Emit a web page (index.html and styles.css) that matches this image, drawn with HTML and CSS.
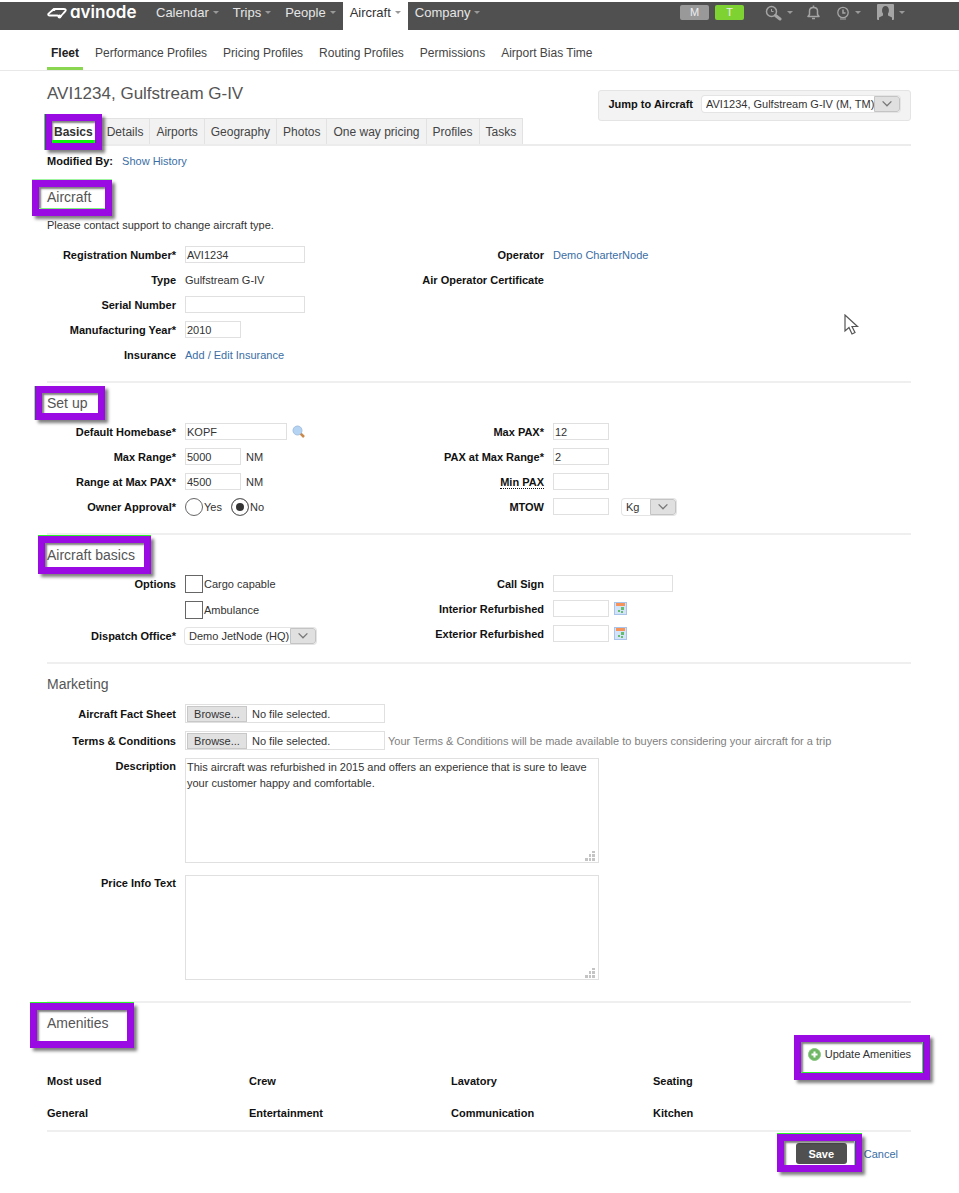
FILE: index.html
```html
<!DOCTYPE html>
<html lang="en">
<head>
    <meta charset="UTF-8">
    <meta name="viewport" content="width=device-width, initial-scale=1.0">
    <title>AVI1234, Gulfstream G-IV - Avinode</title>
    <link rel="stylesheet" href="styles.css">
</head>
<body>
    <header class="top-bar">
        <a class="logo" href="#">
            <svg width="20" height="14" viewBox="0 0 20 14" fill="none" stroke="#fff" stroke-width="1.800" stroke-linejoin="round" stroke-linecap="round">
                <path d="M10.500 9.500H2.500C0.800 9.500 0.800 8.200 2 7.300C4 5.500 5.500 3.500 8 3H17C19.500 3 19 4.500 18 5.500C16.500 7 15.500 8.500 14 10"/>
                <circle cx="12.500" cy="10.500" r="2" fill="#fff" stroke="none"/>
                <circle cx="7" cy="3.500" r="1.500" fill="#fff" stroke="none"/>
            </svg>
            <span>avinode</span>
        </a>
        <nav class="main-nav">
            <a href="#">Calendar<i class="caret"></i></a>
            <a href="#">Trips<i class="caret"></i></a>
            <a href="#">People<i class="caret"></i></a>
            <a href="#" class="active">Aircraft<i class="caret"></i></a>
            <a href="#">Company<i class="caret"></i></a>
        </nav>
        <div class="tools">
            <button class="badge" type="button">M</button>
            <button class="badge badge-green" type="button">T</button>
            <a class="tool tool-search" href="#" aria-label="Search">
                <svg width="17" height="16" viewBox="0 0 17 16" fill="none" stroke="#a5a5a5">
                    <circle cx="6.500" cy="6.500" r="5" stroke-width="1.500"/>
                    <path d="M6.500 4V6.500H8.500" stroke-width="1"/>
                    <path d="M10.500 10.500L15 14" stroke-width="3" stroke-linecap="round"/>
                </svg>
                <i class="caret"></i>
            </a>
            <a class="tool" href="#" aria-label="Notifications">
                <svg width="13" height="15" viewBox="0 0 13 15" fill="none" stroke="#a5a5a5" stroke-width="1.500">
                    <path d="M1 11.500H12L10.500 9.500V6C10.500 3.500 9 2.500 6.500 2.500S2.500 3.500 2.500 6V9.500Z" stroke-linejoin="round"/>
                    <path d="M6.500 0.500V2.500M5 13.500H8"/>
                </svg>
            </a>
            <a class="tool tool-clock" href="#" aria-label="Recent">
                <svg width="14" height="14" viewBox="0 0 14 14" fill="none" stroke="#a5a5a5">
                    <circle cx="7" cy="6.500" r="5.200" stroke-width="1.300"/>
                    <path d="M7 3.500V7H9.500" stroke-width="1.500"/>
                    <path d="M4 13H10" stroke-width="1"/>
                </svg>
                <i class="caret"></i>
            </a>
            <a class="tool tool-user" href="#" aria-label="Account">
                <svg width="17" height="16" viewBox="0 0 17 16">
                    <rect width="17" height="16" rx="1" fill="#a5a5a5"/>
                    <path d="M2 16V13.500L6 11.500V9.500C4.500 8 4.500 2 8.500 2S12.500 8 11 9.500V11.500L15 13.500V16Z" fill="#505050"/>
                </svg>
                <i class="caret"></i>
            </a>
        </div>
    </header>

    <nav class="sub-nav">
        <a href="#" class="active">Fleet</a>
        <a href="#">Performance Profiles</a>
        <a href="#">Pricing Profiles</a>
        <a href="#">Routing Profiles</a>
        <a href="#">Permissions</a>
        <a href="#">Airport Bias Time</a>
    </nav>

    <main class="page">
        <div class="page-head">
            <div>
                <h1>AVI1234, Gulfstream G-IV</h1>
                <nav class="tabs">
                    <a href="#" class="active">Basics<span class="mark mark-basics"></span></a>
                    <a href="#">Details</a>
                    <a href="#">Airports</a>
                    <a href="#">Geography</a>
                    <a href="#">Photos</a>
                    <a href="#">One way pricing</a>
                    <a href="#">Profiles</a>
                    <a href="#">Tasks</a>
                </nav>
            </div>
            <div class="jump">
                <label for="jump">Jump to Aircraft</label>
                <span class="select select-jump">
                    <select id="jump"><option>AVI1234, Gulfstream G-IV (M, TM)</option></select>
                    <svg viewBox="0 0 26 16"><path d="M8 5L13 10L18 5"/></svg>
                </span>
            </div>
        </div>

        <p class="modified"><b>Modified By:</b> <a href="#">Show History</a></p>

        <form>
            <section class="first">
                <h2>Aircraft<span class="mark mark-aircraft"></span></h2>
                <p class="note">Please contact support to change aircraft type.</p>
                <div class="columns">
                    <div class="rows">
                        <div class="row">
                            <label for="reg">Registration Number*</label>
                            <input class="medium" type="text" id="reg" value="AVI1234">
                        </div>
                        <div class="row">
                            <span class="label">Type</span>
                            <span>Gulfstream G-IV</span>
                        </div>
                        <div class="row">
                            <label for="serial">Serial Number</label>
                            <input class="medium" type="text" id="serial">
                        </div>
                        <div class="row">
                            <label for="year">Manufacturing Year*</label>
                            <input class="short" type="text" id="year" value="2010">
                        </div>
                        <div class="row">
                            <span class="label">Insurance</span>
                            <a href="#">Add / Edit Insurance</a>
                        </div>
                    </div>
                    <div class="rows">
                        <div class="row">
                            <span class="label">Operator</span>
                            <a href="#">Demo CharterNode</a>
                        </div>
                        <div class="row">
                            <span class="label">Air Operator Certificate</span>
                        </div>
                    </div>
                </div>
                <svg class="pointer" width="16" height="22" viewBox="0 0 16 22">
                    <path d="M1 1V17L5 13.500L8 20L11 18.500L8 12.500H13.500Z" fill="#fff" stroke="#555" stroke-width="1.200"/>
                </svg>
            </section>

            <section>
                <h2>Set up<span class="mark mark-setup"></span></h2>
                <div class="columns">
                    <div class="rows">
                        <div class="row">
                            <label for="homebase">Default Homebase*</label>
                            <input class="base" type="text" id="homebase" value="KOPF">
                            <button class="icon" type="button" aria-label="Find airport">
                                <svg width="13" height="13" viewBox="0 0 13 13">
                                    <path d="M8.500 8.500L12 12" stroke="#c98a4b" stroke-width="2.500"/>
                                    <circle cx="5.500" cy="5.500" r="4.500" fill="#b5d3f3" stroke="#a4bfe0"/>
                                </svg>
                            </button>
                        </div>
                        <div class="row">
                            <label for="max-range">Max Range*</label>
                            <input class="short" type="text" id="max-range" value="5000">
                            <span>NM</span>
                        </div>
                        <div class="row">
                            <label for="range-pax">Range at Max PAX*</label>
                            <input class="short" type="text" id="range-pax" value="4500">
                            <span>NM</span>
                        </div>
                        <div class="row">
                            <span class="label">Owner Approval*</span>
                            <label class="check"><input type="radio" name="approval">Yes</label>
                            <label class="check"><input type="radio" name="approval" checked>No</label>
                        </div>
                    </div>
                    <div class="rows">
                        <div class="row">
                            <label for="max-pax">Max PAX*</label>
                            <input class="short" type="text" id="max-pax" value="12">
                        </div>
                        <div class="row">
                            <label for="pax-range">PAX at Max Range*</label>
                            <input class="short" type="text" id="pax-range" value="2">
                        </div>
                        <div class="row">
                            <label for="min-pax"><span class="hint">Min PAX</span></label>
                            <input class="short" type="text" id="min-pax">
                        </div>
                        <div class="row">
                            <label for="mtow">MTOW</label>
                            <input class="short" type="text" id="mtow">
                            <span class="select select-unit">
                                <select aria-label="Weight unit"><option>Kg</option></select>
                                <svg viewBox="0 0 26 16"><path d="M8 5L13 10L18 5"/></svg>
                            </span>
                        </div>
                    </div>
                </div>
            </section>

            <section>
                <h2>Aircraft basics<span class="mark mark-options"></span></h2>
                <div class="columns">
                    <div class="rows">
                        <div class="row">
                            <span class="label">Options</span>
                            <label class="check"><input type="checkbox">Cargo capable</label>
                        </div>
                        <div class="row">
                            <span class="label"></span>
                            <label class="check"><input type="checkbox">Ambulance</label>
                        </div>
                        <div class="row">
                            <label for="office">Dispatch Office*</label>
                            <span class="select select-office">
                                <select id="office"><option>Demo JetNode (HQ)</option></select>
                                <svg viewBox="0 0 26 16"><path d="M8 5L13 10L18 5"/></svg>
                            </span>
                        </div>
                    </div>
                    <div class="rows">
                        <div class="row">
                            <label for="call-sign">Call Sign</label>
                            <input class="medium" type="text" id="call-sign">
                        </div>
                        <div class="row">
                            <label for="interior">Interior Refurbished</label>
                            <input class="short" type="text" id="interior">
                            <button class="icon" type="button" aria-label="Pick date">
                                <svg width="13" height="13" viewBox="0 0 13 13">
                                    <rect x="0.500" y="0.500" width="12" height="12" fill="#d3e4f8" stroke="#a9c4ea"/>
                                    <rect x="2" y="1" width="9" height="3" fill="#f5935a"/>
                                    <path d="M7 5H10V8H7ZM4 8H6V10H4ZM7 9H9V11H7Z" fill="#62bd6d"/>
                                </svg>
                            </button>
                        </div>
                        <div class="row">
                            <label for="exterior">Exterior Refurbished</label>
                            <input class="short" type="text" id="exterior">
                            <button class="icon" type="button" aria-label="Pick date">
                                <svg width="13" height="13" viewBox="0 0 13 13">
                                    <rect x="0.500" y="0.500" width="12" height="12" fill="#d3e4f8" stroke="#a9c4ea"/>
                                    <rect x="2" y="1" width="9" height="3" fill="#f5935a"/>
                                    <path d="M7 5H10V8H7ZM4 8H6V10H4ZM7 9H9V11H7Z" fill="#62bd6d"/>
                                </svg>
                            </button>
                        </div>
                    </div>
                </div>
            </section>

            <section>
                <h2>Marketing</h2>
                <div class="rows">
                    <div class="row">
                        <label for="fact-sheet">Aircraft Fact Sheet</label>
                        <span class="file">
                            <span class="browse">Browse...</span>
                            <span>No file selected.</span>
                            <input type="file" id="fact-sheet">
                        </span>
                    </div>
                    <div class="row">
                        <label for="terms">Terms &amp; Conditions</label>
                        <span class="file">
                            <span class="browse">Browse...</span>
                            <span>No file selected.</span>
                            <input type="file" id="terms">
                        </span>
                        <span class="help">Your Terms &amp; Conditions will be made available to buyers considering your aircraft for a trip</span>
                    </div>
                    <div class="row row-area">
                        <label for="description">Description</label>
                        <span class="area">
                            <textarea id="description">This aircraft was refurbished in 2015 and offers an experience that is sure to leave your customer happy and comfortable.</textarea>
                            <svg width="10" height="10" viewBox="0 0 10 10"><path d="M7 0h3v2h-3zM7 3h3v3h-3zM7 7h3v3h-3zM4 3h2v3h-2zM4 7h2v3h-2zM0 7h3v3h-3z"/></svg>
                        </span>
                    </div>
                    <div class="row row-area">
                        <label for="price-info">Price Info Text</label>
                        <span class="area">
                            <textarea id="price-info"></textarea>
                            <svg width="10" height="10" viewBox="0 0 10 10"><path d="M7 0h3v2h-3zM7 3h3v3h-3zM7 7h3v3h-3zM4 3h2v3h-2zM4 7h2v3h-2zM0 7h3v3h-3z"/></svg>
                        </span>
                    </div>
                </div>
            </section>

            <section class="amenities">
                <h2>Amenities<span class="mark mark-amenities"></span></h2>
                <div class="update">
                    <a href="#">
                        <svg width="13" height="13" viewBox="0 0 13 13">
                            <circle cx="6.500" cy="6.500" r="6" fill="#6fb765" stroke="#8cc583"/>
                            <path d="M6.500 3.500V9.500M3.500 6.500H9.500" stroke="#fff" stroke-width="2"/>
                        </svg>
                        Update Amenities
                        <span class="mark mark-update"></span>
                    </a>
                </div>
                <div class="amenity-list">
                    <b>Most used</b>
                    <b>Crew</b>
                    <b>Lavatory</b>
                    <b>Seating</b>
                    <b>General</b>
                    <b>Entertainment</b>
                    <b>Communication</b>
                    <b>Kitchen</b>
                </div>
            </section>

            <div class="actions">
                <span class="save-wrap">
                    <button class="save" type="submit">Save</button>
                    <span class="mark mark-save"></span>
                </span>
                <a href="#">Cancel</a>
            </div>
        </form>
    </main>
</body>
</html>
```

FILE: styles.css
```css
* {
    box-sizing: border-box;
}

body {
    margin: 0;
    padding-top: 2px;
    font-family: "Liberation Sans", Arial, sans-serif;
    font-size: 11px;
    line-height: 16px;
    color: #333;
    background-color: #fff;
}

a {
    color: #3a6ea5;
    text-decoration: none;
}

a:hover {
    text-decoration: underline;
}

h1, h2, p {
    margin: 0;
    font-weight: normal;
}

svg {
    display: block;
    flex: none;
}

b {
    color: #111;
}

input, select, textarea, button {
    font: inherit;
    color: inherit;
    margin: 0;
}

/* Top bar */
.top-bar {
    display: flex;
    height: 28px;
    padding: 0 54px 0 47px;
    background-color: #505050;
}

.logo {
    display: flex;
    gap: 3px;
    width: 102px;
    padding-top: 2px;
    font-family: Inter, "Open Sans", sans-serif;
    font-feature-settings: "cv11";
    font-size: 17px;
    font-weight: 600;
    color: #fff;
}

.logo svg {
    margin-top: 2px;
}

.main-nav {
    display: flex;
}

.main-nav a {
    display: flex;
    align-items: center;
    gap: 4px;
    padding: 0 7px 7px;
    font-size: 13px;
    color: #e6e6e6;
}

.main-nav .active {
    background-color: #fff;
    color: #333;
}

.caret {
    width: 5px;
    border: solid transparent;
    border-width: 3px 3px 0;
    border-top-color: #999;
}

.tools {
    display: flex;
    align-items: center;
    gap: 6px;
    margin-left: auto;
    padding-bottom: 7px;
}

.badge {
    width: 29px;
    height: 15px;
    padding: 0;
    border: 0;
    border-radius: 2px;
    background-color: #999;
    color: #eee;
    line-height: 15px;
}

.badge-green {
    background-color: #7ed333;
}

.tool {
    display: flex;
    align-items: center;
    gap: 5px;
}

.tool-search {
    margin: 0 8px 0 15px;
}

.tool-clock {
    margin: 0 10px;
}

.tool-user svg {
    margin-top: -2px;
}

/* Sub navigation */
.sub-nav {
    display: flex;
    gap: 8px;
    padding: 0 47px;
    border-bottom: 1px solid #e8e8e8;
    font-size: 12px;
}

.sub-nav a {
    padding: 15px 4px 6px;
    border-bottom: 3px solid transparent;
    color: #444;
}

.sub-nav .active {
    border-bottom-color: #8bd650;
    font-weight: bold;
    color: #222;
}

.page {
    padding: 0 48px 20px 47px;
}

.page-head {
    display: flex;
    justify-content: space-between;
    align-items: flex-start;
    padding-top: 13px;
    border-bottom: 2px solid #ececec;
}

h1 {
    margin-bottom: 14px;
    font-size: 17px;
    line-height: 20px;
    color: #555;
}

.tabs {
    display: flex;
}

.tabs a {
    position: relative;
    padding: 5px 6px 4px;
    border: solid #e2e2e2;
    border-width: 1px 1px 0 0;
    background-color: #f2f2f2;
    font-size: 12px;
    color: #444;
}

.tabs .active {
    padding: 5px 7px 4px;
    background-color: #fff;
    font-weight: bold;
    color: #333;
}

.jump {
    display: flex;
    align-items: center;
    gap: 9px;
    height: 31px;
    margin-top: 6px;
    padding: 0 10px 4px 9px;
    border: 1px solid #e4e4e4;
    border-radius: 3px;
    background-color: #f3f3f3;
}

.jump label {
    font-weight: bold;
    color: #111;
}

.modified {
    padding: 7px 0 18px;
}

.modified a {
    margin-left: 6px;
}

/* Form sections */
section {
    position: relative;
    padding: 10px 0 17px;
    border-bottom: 2px solid #efefef;
}

.first {
    padding: 0 0 18px;
}

h2 {
    position: relative;
    width: fit-content;
    margin-bottom: 10px;
    font-size: 14px;
    line-height: 20px;
    color: #555;
}

.note {
    margin-bottom: 13px;
}

.columns {
    display: grid;
    grid-template-columns: 368px 1fr;
}

.rows {
    display: flex;
    flex-direction: column;
    gap: 8px;
}

.row {
    display: flex;
    align-items: center;
    gap: 5px;
    min-height: 17px;
}

.row > label:first-child,
.row > .label {
    flex: none;
    width: 129px;
    margin-right: 4px;
    text-align: right;
    font-weight: bold;
    color: #111;
}

.hint {
    border-bottom: 1px dotted #111;
}

input[type="text"] {
    height: 17px;
    padding: 0 1px;
    border: 1px solid #e0e0e0;
}

.short {
    width: 56px;
}

.base {
    width: 102px;
}

.medium {
    width: 120px;
}

.icon {
    padding: 0;
    border: 0;
    background: none;
}

.check {
    display: flex;
    align-items: center;
    gap: 1px;
    margin-right: 4px;
}

.check input {
    appearance: none;
    width: 18px;
    height: 18px;
    border: 1px solid #666;
    background-color: #fff;
}

.check input[type="radio"] {
    border-radius: 50%;
}

.check input[type="radio"]:checked {
    background-color: #333;
    box-shadow: inset 0 0 0 4px #fff;
}

.select {
    display: flex;
    height: 16px;
    border-radius: 3px;
    box-shadow: 0 0 0 1px #e4e4e4;
    background-color: #fff;
    overflow: hidden;
}

.select select {
    appearance: none;
    flex: 1;
    min-width: 0;
    padding: 0 0 0 4px;
    border: 0;
    background: none;
}

.select svg {
    width: 26px;
    height: 16px;
    border: 1px solid #c4c4c4;
    border-radius: 0 3px 3px 0;
    background-color: #e0e0e0;
    fill: none;
    stroke: #777;
    stroke-width: 1.500;
    pointer-events: none;
}

.select-jump {
    width: 198px;
}

.select-office {
    width: 131px;
    margin: 1px 0;
}

.select-unit {
    width: 54px;
    margin-left: 8px;
}

.file {
    position: relative;
    display: flex;
    flex: none;
    align-items: center;
    gap: 5px;
    width: 200px;
    height: 19px;
    padding: 1px;
    border: 1px solid #e0e0e0;
}

.file input {
    position: absolute;
    inset: 0;
    width: 100%;
    opacity: 0;
}

.browse {
    width: 60px;
    height: 16px;
    border: 1px solid #c8c8c8;
    background-color: #e1e1e1;
    line-height: 15px;
    text-align: center;
}

.help {
    margin-left: -2px;
    color: #808080;
}

.row-area {
    align-items: flex-start;
    margin-bottom: 4px;
}

.area {
    position: relative;
    width: 414px;
}

.area textarea {
    display: block;
    width: 100%;
    height: 105px;
    padding: 0 1px;
    border: 1px solid #e0e0e0;
    resize: none;
}

.area svg {
    position: absolute;
    right: 4px;
    bottom: 2px;
    fill: #c4c4c4;
}

/* Amenities */
.amenities {
    padding-bottom: 9px;
}

.update {
    display: flex;
    justify-content: flex-end;
    margin-bottom: 8px;
    line-height: 22px;
}

.update a {
    position: relative;
    display: flex;
    align-items: center;
    gap: 4px;
    color: #333;
}

.amenity-list {
    display: grid;
    grid-template-columns: repeat(4, 1fr);
    row-gap: 16px;
    padding-right: 56px;
}

.actions {
    display: flex;
    justify-content: flex-end;
    align-items: center;
    gap: 17px;
    padding: 11px 13px 0 0;
}

.save-wrap {
    position: relative;
}

.save {
    display: block;
    width: 51px;
    height: 21px;
    padding: 0;
    border: 0;
    border-radius: 3px;
    background-color: #505050;
    font-weight: bold;
    color: #fff;
}

/* Purple callout frames */
.mark {
    position: absolute;
    z-index: 1;
    border: 7px solid #9a0be3;
    box-shadow: 3px 3px 3px rgba(0, 0, 0, 0.5), inset 2px 2px 2px rgba(0, 0, 0, 0.5);
    pointer-events: none;
}

.mark-basics {
    inset: -5px -2px -6px -2px;
    box-shadow: -1px 0 0 #2cf52c, 3px 3px 3px rgba(0, 0, 0, 0.5), inset 0 -3px 0 #0cf50c, inset 1px 2px 2px rgba(0, 0, 0, 0.5);
}

.mark-aircraft {
    inset: -7px -21px -9px -15px;
    box-shadow: 0 -1px 0 #9df59d, 3px 3px 3px rgba(0, 0, 0, 0.5), inset 0 -1px 0 #7df57d, inset 2px 2px 2px rgba(0, 0, 0, 0.5);
}

.mark-setup {
    inset: -7px -18px -7px -12px;
    box-shadow: -1px 0 0 #7df57d, 3px 3px 3px rgba(0, 0, 0, 0.5), inset 2px 2px 2px rgba(0, 0, 0, 0.5);
}

.mark-options {
    inset: -9px -16px -9px -9px;
    box-shadow: 0 -1px 0 #2cf52c, 3px 3px 3px rgba(0, 0, 0, 0.5), inset 2px 2px 2px rgba(0, 0, 0, 0.5);
}

.mark-amenities {
    inset: -10px -26px -15px -17px;
    box-shadow: 0 -1px 0 #2cf52c, 3px 3px 3px rgba(0, 0, 0, 0.5), inset 2px 2px 2px rgba(0, 0, 0, 0.5);
}

.mark-update {
    inset: -8px -19px -15px -14px;
    box-shadow: 3px 3px 3px rgba(0, 0, 0, 0.5), inset -1px -1px 0 #2cf52c, inset 2px 2px 2px rgba(0, 0, 0, 0.5);
}

.mark-save {
    inset: -9px -15px -8px -19px;
    box-shadow: 0 -1px 0 #2cf52c, 3px 3px 3px rgba(0, 0, 0, 0.5), inset -1px 0 0 #5cf55c, inset 2px 2px 2px rgba(0, 0, 0, 0.5);
}

.pointer {
    position: absolute;
    top: 127px;
    right: 51px;
}
```
